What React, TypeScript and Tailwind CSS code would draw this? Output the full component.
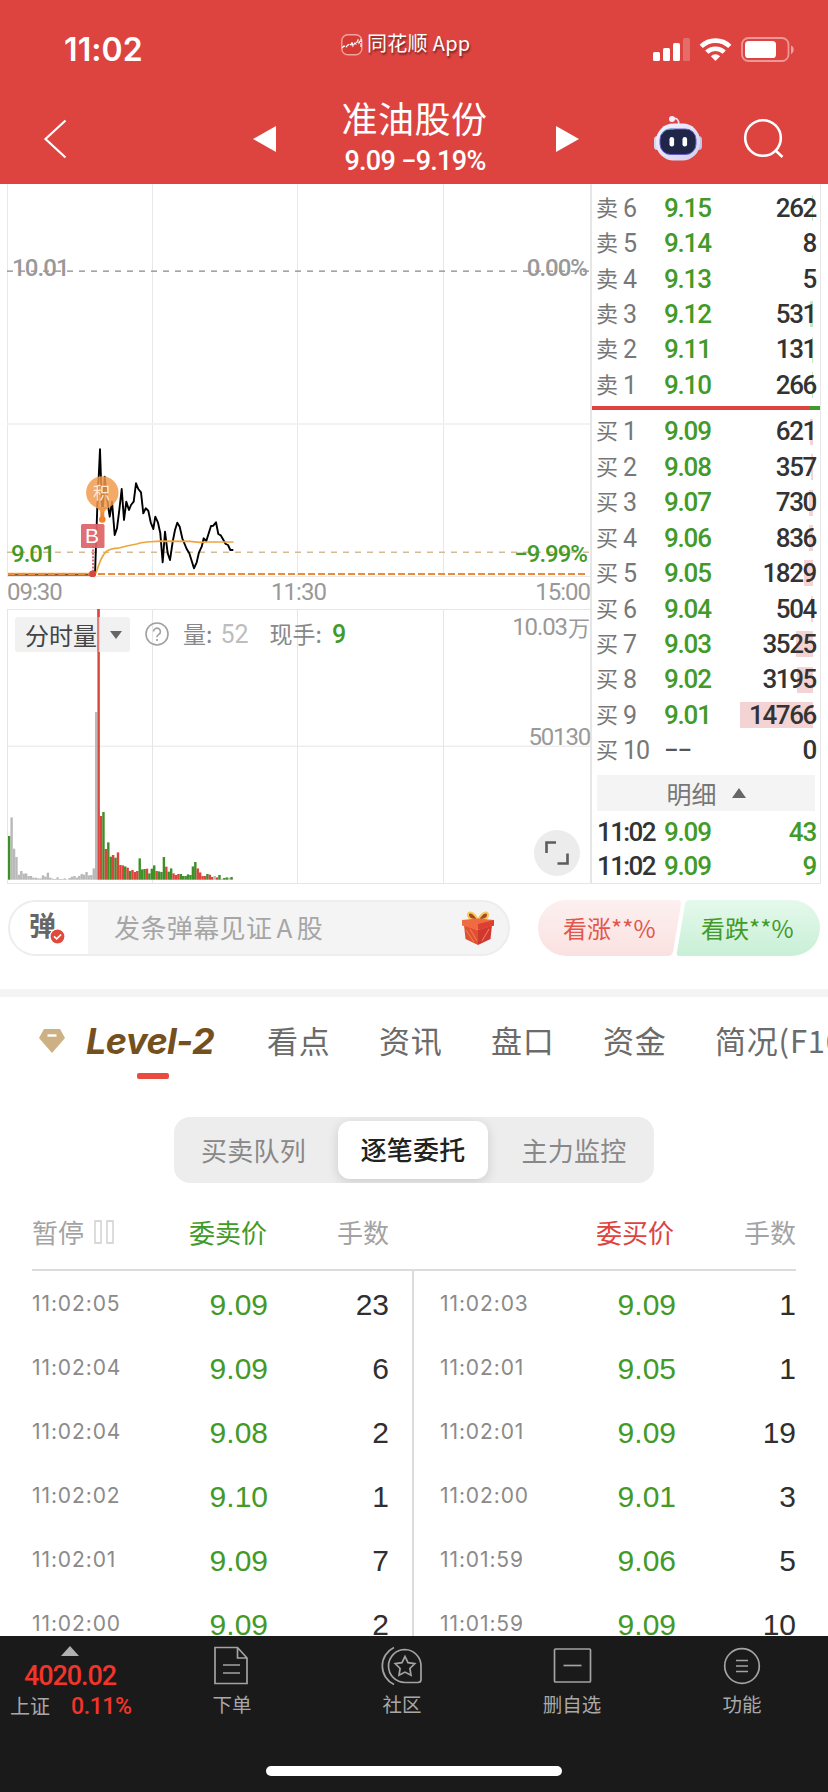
import type { ReactNode } from "react";

type Level = { side: "sell" | "buy"; n: number; price: string; qty: number; bar: number };
type Entry = { time: string; price: string; qty: number };

const SELLS: Level[] = [
  { side: "sell", n: 6, price: "9.15", qty: 262, bar: 1 },
  { side: "sell", n: 5, price: "9.14", qty: 8, bar: 0 },
  { side: "sell", n: 4, price: "9.13", qty: 5, bar: 0 },
  { side: "sell", n: 3, price: "9.12", qty: 531, bar: 3 },
  { side: "sell", n: 2, price: "9.11", qty: 131, bar: 1 },
  { side: "sell", n: 1, price: "9.10", qty: 266, bar: 1 },
];

const BUYS: Level[] = [
  { side: "buy", n: 1, price: "9.09", qty: 621, bar: 3 },
  { side: "buy", n: 2, price: "9.08", qty: 357, bar: 2 },
  { side: "buy", n: 3, price: "9.07", qty: 730, bar: 4 },
  { side: "buy", n: 4, price: "9.06", qty: 836, bar: 4 },
  { side: "buy", n: 5, price: "9.05", qty: 1829, bar: 9 },
  { side: "buy", n: 6, price: "9.04", qty: 504, bar: 2 },
  { side: "buy", n: 7, price: "9.03", qty: 3525, bar: 17 },
  { side: "buy", n: 8, price: "9.02", qty: 3195, bar: 16 },
  { side: "buy", n: 9, price: "9.01", qty: 14766, bar: 73 },
  { side: "buy", n: 10, price: "--", qty: 0, bar: 0 },
];

const SELL_ENTRIES: Entry[] = [
  { time: "11:02:05", price: "9.09", qty: 23 },
  { time: "11:02:04", price: "9.09", qty: 6 },
  { time: "11:02:04", price: "9.08", qty: 2 },
  { time: "11:02:02", price: "9.10", qty: 1 },
  { time: "11:02:01", price: "9.09", qty: 7 },
  { time: "11:02:00", price: "9.09", qty: 2 },
];

const BUY_ENTRIES: Entry[] = [
  { time: "11:02:03", price: "9.09", qty: 1 },
  { time: "11:02:01", price: "9.05", qty: 1 },
  { time: "11:02:01", price: "9.09", qty: 19 },
  { time: "11:02:00", price: "9.01", qty: 3 },
  { time: "11:01:59", price: "9.06", qty: 5 },
  { time: "11:01:59", price: "9.09", qty: 10 },
];

const PRICE_LINE =
  "8,574.6 95,574.6 97.3,507 100,449.3 102.3,519 104.7,476.7 107.3,500 109.7,516.7 112,501.7 114.7,535 117,528.3 119.3,510 121.7,489 124,520 126.3,501.7 129,510 131,505 133.7,501.7 136,483.3 138.3,489 141,492.3 143.3,513.3 145.7,508.3 148.3,510.7 150.7,522.3 153.3,529 155.3,516.7 158,522.7 160.3,533.3 162.7,562.3 165,531.7 167.7,553.3 170,560 172.7,541.7 175,530 177.3,522.7 179.7,526.7 182.3,538.3 186.7,549 189.3,553.3 194,568.3 196.7,562.3 199,552.3 201.7,546.7 203.7,538.3 206.3,541 211,526 213.3,525.7 216,522.3 218.3,534 220.7,535.3 225.7,544 228,545 230.3,550 233.3,550";

const AVG_LINE =
  "8,573.6 95.5,573.6 96.7,570.7 100,561.7 103.3,555 107.3,550.7 110,549.5 115,548.3 118,548.2 126.7,546 136.7,544 140,543 146.7,542 160,541.2 190,541.4 200,542.3 207,542 233.5,542";

// one entry a minute: g = down, r = up, x = flat
const VOLUMES =
  "g43.7 x62.3 x31 x22.7 x5 x8.7 x6 x6.3 x3.7 x3.7 x2 x2 x1.3 x1.3 x4.3 x3 x7 x2 x1 x.7 x2.3 x.7 x.7 x1.3 x.3 x1.7 x3 x3.7 x2 x3.7 x5.7 x5 x7.7 x4.3 x4.7 x11.3 x167.7 r270.7 r63.7 g67.7 r30.7 g37.3 g23 r24.7 g22 r27.3 r14.7 r14.3 g13.3 r12 g8.7 r9.7 r7.7 r8.7 g21.3 g10.3 g10.7 r11 g6.3 g11 g14.3 r8.7 g8.3 g7.7 g22.7 r13 g8 g11.3 r6.3 r4.7 r5.7 g5.7 g3.7 g3.7 g5.3 g4.7 g13.3 g17.7 r11.3 r7.3 r3.7 r3.7 g5.7 r5 r2.7 x3.7 r2.3 g4.7 x1 g1.7 g2.3 x2 g2.7".split(
    " "
  );

const VOLUME_COLORS: Record<string, string> = { g: "#3f8f29", r: "#dc443e", x: "#b9b9b9" };

const TABS = ["看点", "资讯", "盘口", "资金", "简况(F10)"];

function StatusBar() {
  return (
    <div className="flex h-[88px] items-start">
      <div className="ml-[64px] mt-[30px] w-[276px] font-['Inter'] text-[32px] leading-[40px] font-semibold tracking-[0.1px]">
        11:02
      </div>
      <div className="mt-[30px] flex items-center">
        <svg className="h-[24px] w-[24px]" viewBox="0 0 24 24" fill="none">
          <rect x="1.8" y="2.8" width="20" height="20" rx="6" fill="#d63a32" stroke="#f0a29f" strokeWidth="1.4" />
          <path d="M2 16l2-2 2 1 3-3 2 1 1-3 1 4 2-3 1 1 2-4 1 3 2-4v9" stroke="#fff" strokeWidth="1.2" strokeDasharray="4 1" />
        </svg>
        <span className="-mt-[1px] ml-[3px] text-[20px] leading-[28px] tracking-[0.3px] [text-shadow:1px_2px_2px_rgba(0,0,0,0.5)]">
          同花顺 App
        </span>
      </div>
      <svg className="mt-[36px] mr-[32px] ml-auto h-[28px] w-[144px]" viewBox="652 36 144 28">
        <rect x="653" y="52" width="7" height="9" rx="1.6" fill="#fff" />
        <rect x="663" y="48" width="7" height="13" rx="1.6" fill="#fff" />
        <rect x="673" y="43" width="7" height="18" rx="1.6" fill="#fff" />
        <rect x="683" y="38" width="7" height="23" rx="1.6" fill="#fff" opacity="0.22" />
        <g fill="none" stroke="#fff" strokeWidth="4.6">
          <path d="M701.2 46.4a20.5 20.5 0 0 1 28.6 0" />
          <path d="M706.8 52.2a12.6 12.6 0 0 1 17.4 0" />
        </g>
        <path d="M715.5 61l-4.6-4.8a6.7 6.7 0 0 1 9.2 0z" fill="#fff" />
        <rect x="742" y="38" width="46.5" height="23" rx="6.5" fill="none" stroke="#fff" strokeOpacity="0.45" strokeWidth="1.8" />
        <rect x="745" y="41" width="31" height="17" rx="3.6" fill="#fff" />
        <path d="M791 45.5c3.6 1.2 3.6 7 0 8.4z" fill="#fff" fillOpacity="0.5" />
      </svg>
    </div>
  );
}

function Robot() {
  return (
    <svg className="h-[48px] w-[50px]" viewBox="0 0 50 48">
      <defs>
        <linearGradient id="shell" x1="0" y1="0" x2="1" y2="1">
          <stop offset="0" stopColor="#f6f3fd" />
          <stop offset="1" stopColor="#cfd0f0" />
        </linearGradient>
      </defs>
      <path d="M18 5c6-2 8 1 8 6" fill="none" stroke="#e9dcf2" strokeWidth="1.8" />
      <circle cx="19" cy="5" r="3" fill="#f3edfa" />
      <rect x="1" y="22" width="7" height="14" rx="3.5" fill="#d5d6f2" />
      <rect x="42" y="22" width="7" height="14" rx="3.5" fill="#c3c4ec" />
      <rect x="3" y="9.500" width="44" height="37" rx="17.500" fill="url(#shell)" />
      <rect x="7" y="15" width="36" height="25.500" rx="10.500" fill="#1f2647" stroke="#6a5ac8" strokeWidth="1" />
      <path d="M9 20c2-5 6-5 12-5" stroke="#58c8de" strokeWidth="0.900" fill="none" />
      <rect x="16.500" y="23" width="4.600" height="9.600" rx="2.300" fill="#fff" />
      <rect x="29.500" y="23" width="4.600" height="9.600" rx="2.300" fill="#fff" />
    </svg>
  );
}

function Header() {
  return (
    <header className="h-[184px] bg-[#dd4440] text-white">
      <StatusBar />
      <div className="flex h-[96px] items-start">
        <svg className="mt-[30px] ml-[42px] h-[42px] w-[26px]" viewBox="0 0 26 42" fill="none">
          <path d="M23.5 2.5L3.5 21l20 18.5" stroke="#fff" strokeWidth="2.2" />
        </svg>
        <svg className="mt-[38px] ml-[185px] h-[26px] w-[23px]" viewBox="0 0 23 26">
          <path d="M0 13L23 0v26z" fill="#fff" />
        </svg>
        <div className="w-[280px] pr-[3px] text-center">
          <h1 className="mt-[5px] text-[36px] leading-[48px] tracking-[0.5px]">准油股份</h1>
          <div className="mt-[6px] pl-[1px] font-['Roboto'] text-[27px] leading-[28px] font-medium tracking-[-0.7px]">
            9.09 −9.19%
          </div>
        </div>
        <svg className="mt-[38px] h-[26px] w-[23px]" viewBox="0 0 23 26">
          <path d="M23 13L0 0v26z" fill="#fff" />
        </svg>
        <div className="mt-[26px] ml-[74px]">
          <Robot />
        </div>
        <svg className="mt-[30px] ml-[40px] h-[42px] w-[42px]" viewBox="0 0 42 42" fill="none" stroke="#fff" strokeWidth="2.6">
          <circle cx="20" cy="20" r="17.8" />
          <path d="M32.5 32.5l7 6.5" />
        </svg>
      </div>
    </header>
  );
}

function PriceChart() {
  return (
    <div className="relative h-[393px]">
      <svg className="block h-[393px] w-[583px]" viewBox="7 184 583 393" fill="none">
        <g stroke="#e8e8e8">
          <path d="M7.5 184v393M152.5 184v393M297.5 184v393M443.5 184v393" />
          <path d="M7 424h583" stroke="#f2f2f2" strokeWidth="2" />
          <path d="M7 576.5h583" />
        </g>
        <path d="M7 271.2h583" stroke="#888" strokeWidth="1.2" strokeDasharray="6 6" />
        <path d="M7 552.2h583" stroke="#d6bb94" strokeWidth="1.4" strokeDasharray="6 6" />
        <polyline points={PRICE_LINE} stroke="#000" strokeWidth="1.9" strokeLinejoin="round" />
        <polyline points={AVG_LINE} stroke="#f0a53c" strokeWidth="1.7" strokeLinejoin="round" />
        <path d="M8 574h577" stroke="#ec8b3a" strokeWidth="2.2" strokeDasharray="7 3" />
        <path d="M102.3 519v-9" stroke="#f08a33" strokeWidth="4" />
        <circle cx="102.3" cy="519.5" r="3.3" fill="#f0822a" />
        <path d="M93 546v28" stroke="#e46c6e" strokeWidth="2" strokeDasharray="2 1.4" />
        <circle cx="92.5" cy="574" r="3.4" fill="#d9463f" />
        <circle cx="102.3" cy="492.5" r="16.2" fill="#f1984a" fillOpacity="0.84" />
        <path d="M96 507h13l-6.5 6z" fill="#f1984a" />
        <rect x="81" y="524" width="23.5" height="24" rx="1.5" fill="#dd6468" fillOpacity="0.93" />
      </svg>
      <span className="absolute top-[297px] left-[86px] text-[17px] leading-[22px] text-[#ffe9d6]">积</span>
      <span className="absolute top-[341px] left-[78px] font-['Liberation_Sans'] text-[21px] leading-[22px] text-white">B</span>
      <span className="absolute top-[69px] left-[5px] font-['Roboto'] text-[24px] leading-[30px] font-medium tracking-[-0.9px] text-[#999]">
        10.01
      </span>
      <span className="absolute top-[69px] right-[3px] font-['Roboto'] text-[24px] leading-[30px] font-medium tracking-[-1px] text-[#999]">
        0.00%
      </span>
      <span className="absolute top-[355px] left-[4px] font-['Roboto'] text-[24px] leading-[30px] font-medium tracking-[-1px] text-[#429a28]">
        9.01
      </span>
      <span className="absolute top-[355px] right-[3px] font-['Roboto'] text-[24px] leading-[30px] font-medium tracking-[-1px] text-[#429a28]">
        −9.99%
      </span>
    </div>
  );
}

function VolumeChart() {
  return (
    <div className="relative h-[275px]">
      <svg className="block h-[275px] w-[583px]" viewBox="7 609 583 275" fill="none">
        <path
          d="M7 609.5h583M7 746.2h583M7 883.5h583M7.5 609v275M152.5 609v275M297.5 609v275M443.5 609v275"
          stroke="#e6e6e6"
        />
        {VOLUMES.map((v, i) => {
          const h = Number(v.slice(1));
          return <rect key={i} x={8 + i * 2.417} y={879.7 - h} width="2.417" height={h} fill={VOLUME_COLORS[v[0]]} />;
        })}
      </svg>
      <div className="absolute top-[8px] left-[8px] flex h-[35px] w-[115px] items-center rounded-[3px] bg-[#eeeeee]/80">
        <span className="ml-[10px] text-[24px] leading-[34px] text-[#444]">分时量</span>
        <svg className="ml-[13px] h-[8px] w-[12px]" viewBox="0 0 12 8">
          <path d="M0 0h12L6 8z" fill="#666" />
        </svg>
      </div>
      <div className="absolute top-0 left-[90px] h-[43px] w-[2.4px] bg-[#dc443e]/60" />
      <div className="absolute top-[8px] left-[138px] flex h-[34px] items-center text-[23px] leading-[34px] text-[#888]">
        <svg className="h-[24px] w-[24px]" viewBox="0 0 24 24" fill="none" stroke="#a0a0a0" strokeWidth="1.6">
          <circle cx="12" cy="12" r="11" />
          <path d="M8.6 9.6a3.4 3.4 0 1 1 5.2 2.8c-1.3.8-1.8 1.4-1.8 2.9M12 17v2" />
        </svg>
        <span className="-mt-[2px] ml-[14px]">量:</span>
        <span className="mt-[1px] ml-[8px] font-['Roboto'] text-[25px] text-[#bdbdbd]">52</span>
        <span className="-mt-[2px] ml-[21px]">现手:</span>
        <span className="mt-[1px] ml-[10px] font-['Roboto'] text-[25px] font-medium text-[#429a28]">9</span>
      </div>
      <span className="absolute top-[2px] right-0 flex text-[22px] leading-[32px] text-[#999]">
        <span className="font-['Roboto'] text-[24px] tracking-[-1.1px]">10.03</span>
        <span className="-mt-[1px] ml-[1px]">万</span>
      </span>
      <span className="absolute top-[112px] right-0 font-['Roboto'] text-[24px] leading-[32px] tracking-[-1.2px] text-[#999]">
        50130
      </span>
      <button className="absolute top-[221px] left-[527px] flex h-[46px] w-[46px] items-center justify-center rounded-full bg-[#ececec]">
        <svg className="h-[24px] w-[24px]" viewBox="0 0 24 24" fill="none" stroke="#5c5c5c" strokeWidth="2.6">
          <path d="M1.5 12V1.5H11M22.500 12.500V22.500H12.500" />
        </svg>
      </button>
    </div>
  );
}

function LevelRow({ level }: { level: Level }) {
  return (
    <div className="relative flex h-[35.45px] items-center pr-[4px] pl-[4px]">
      <span className="-mt-[2px] w-[68px] text-[22px] leading-[34px] whitespace-nowrap text-[#777]">
        {level.side === "sell" ? "卖" : "买"}
        <span className="relative top-[1px] ml-[5px] font-['Roboto'] text-[25px] tracking-[-1px]">{level.n}</span>
      </span>
      <span
        className={`font-['Roboto'] text-[26px] leading-[34px] font-medium tracking-[-1.2px] ${
          level.price === "--" ? "text-[#555]" : "text-[#429a28]"
        }`}
      >
        {level.price === "--" ? "−−" : level.price}
      </span>
      {level.bar > 0 && (
        <div
          className={`absolute top-[5px] right-[7px] h-[26px] ${level.side === "sell" ? "bg-[#c4e6c4]" : "bg-[#f4d3d5]"}`}
          style={{ width: level.bar }}
        />
      )}
      <span className="relative ml-auto font-['Roboto'] text-[26px] leading-[34px] font-medium tracking-[-1.4px] text-[#333]">
        {level.qty}
      </span>
    </div>
  );
}

function TradeRow({ qty }: { qty: number }) {
  return (
    <div className="flex h-[33.500px] items-center pr-[4px] pl-[5px] font-['Roboto'] text-[26px] leading-[33px] font-medium tracking-[-1.2px] text-[#429a28]">
      <span className="w-[67px] tracking-[-1.6px] text-[#333]">11:02</span>
      <span>9.09</span>
      <span className="ml-auto">{qty}</span>
    </div>
  );
}

function OrderBook() {
  return (
    <div className="h-[700px] w-[231px] border-r border-b border-l-2 border-[#e6e6e6] border-l-[#e6e6e6] pt-[6px]">
      {SELLS.map((l) => (
        <LevelRow key={l.n} level={l} />
      ))}
      <div className="mt-[3px] mb-[4px] flex h-[4px] bg-[#dd4440]">
        <div className="ml-auto w-[10px] bg-[#429a28]" />
      </div>
      {BUYS.map((l) => (
        <LevelRow key={l.n} level={l} />
      ))}
      <div className="mx-[5px] mt-[7px] mb-[5px] flex h-[36px] items-center justify-center bg-[#f4f4f4] text-[25px] leading-[36px] text-[#777]">
        明细
        <svg className="ml-[15px] h-[10px] w-[14px]" viewBox="0 0 14 10">
          <path d="M0 10L7 0l7 10z" fill="#666" />
        </svg>
      </div>
      <TradeRow qty={43} />
      <TradeRow qty={9} />
    </div>
  );
}

function Gift() {
  return (
    <svg className="h-[36px] w-[34px]" viewBox="0 0 34 36">
      <path d="M17 10C12 0 5 1 7.500 7c1.500 3.500 6 3 9.500 3zM17 10c5-10 12-9 9.500-3-1.500 3.500-6 3-9.500 3z" fill="#a8482a" stroke="#f6c958" strokeWidth="2" />
      <path d="M3 15l14 5v15L4.500 29z" fill="#e0512f" />
      <path d="M31 15l-14 5v15l12.500-6z" fill="#cf3730" />
      <path d="M1 10l16-1.500L33 10v5.500L17 20 1 15.500z" fill="#f06a42" />
      <path d="M17 14l16-4v5.500L17 20z" fill="#db4030" />
      <path d="M5 20l8 12M9 19l7 12M21 31l7-12" stroke="#ee7a50" strokeWidth="1.100" />
    </svg>
  );
}

function CommentBar() {
  return (
    <div className="flex h-[105px] items-start pt-[16px] pl-[8px]">
      <div className="flex h-[56px] w-[502px] items-center overflow-hidden rounded-full border-2 border-[#ededed] bg-[#f4f4f4]">
        <div className="relative h-full w-[78px] bg-white">
          <span className="absolute top-[5px] left-[19px] text-[27px] leading-[36px] font-bold text-[#666]">弹</span>
          <svg className="absolute top-[26px] left-[39px] h-[17px] w-[17px]" viewBox="0 0 17 17">
            <circle cx="8.500" cy="8.500" r="7.600" fill="#e04a3c" stroke="#fff" strokeWidth="1.400" />
            <path d="M5 8.300l2.700 2.500 4.400-4.300" fill="none" stroke="#fff" strokeWidth="1.700" />
          </svg>
        </div>
        <span className="-mt-[2px] ml-[26px] text-[26px] leading-[50px] tracking-[0.4px] text-[#a6a6a6]">
          发条弹幕见证<span className="mx-[4px]">A</span>股
        </span>
        <div className="mr-[13px] ml-auto">
          <Gift />
        </div>
      </div>
      <div className="relative ml-[28px] h-[56px] w-[282px]">
        <svg className="block h-[56px] w-[282px]" viewBox="0 0 282 56">
          <defs>
            <linearGradient id="bull" x1="0" y1="0" x2="0" y2="1">
              <stop offset="0" stopColor="#fdf0f0" />
              <stop offset="1" stopColor="#fae1e1" />
            </linearGradient>
            <linearGradient id="bear" x1="0" y1="0" x2="0" y2="1">
              <stop offset="0" stopColor="#e5f9ec" />
              <stop offset="1" stopColor="#c9efd6" />
            </linearGradient>
          </defs>
          <path d="M28 0h111q4.500 0 4 4l-8 48q-1 4-5 4H28a28 28 0 0 1 0-56z" fill="url(#bull)" />
          <path d="M152 0h102a28 28 0 0 1 0 56H142q-4 0-3-4l8-48q1-4 5-4z" fill="url(#bear)" />
        </svg>
        <div className="absolute inset-0 flex text-[24px] leading-[55px]">
          <span className="ml-[25px] w-[138px] text-[#e2574c]">看涨**%</span>
          <span className="text-[#429a28]">看跌**%</span>
        </div>
      </div>
    </div>
  );
}

function Tabs() {
  return (
    <nav className="flex h-[120px] items-start overflow-hidden whitespace-nowrap">
      <svg className="mt-[31px] ml-[38px] h-[26px] w-[28px]" viewBox="0 0 28 26">
        <path d="M6 1h16l5 9-13 15L1 10z" fill="#cdb083" />
        <path d="M9.500 7.500h9" stroke="#fff" strokeWidth="2.400" />
      </svg>
      <div className="ml-[20px] w-[133px]">
        <div className="mt-[20px] font-['Inter'] text-[36px] leading-[48px] font-bold tracking-[-0.5px] text-[#74501f] italic">
          Level-2
        </div>
        <div className="mt-[8px] ml-[51px] h-[6px] w-[32px] rounded-[2px] bg-[#ea4b3f]" />
      </div>
      {TABS.map((t, i) => (
        <span
          key={t}
          className={`mt-[19px] w-[112px] shrink-0 text-[31px] leading-[48px] tracking-[0.8px] text-[#6b6b6b] ${i === 0 ? "ml-[48px]" : ""}`}
        >
          {t}
        </span>
      ))}
    </nav>
  );
}

function Segments() {
  return (
    <div className="mx-auto flex h-[66px] w-[480px] items-center overflow-hidden rounded-[16px] bg-[#ededed] text-[26px] leading-[56px] tracking-[0.2px] text-[#888]">
      <span className="w-[164px] pr-[5px] text-center">买卖队列</span>
      <span className="h-[58px] w-[150px] rounded-[12px] bg-white text-center font-medium text-[#222] shadow-[0_3px_12px_rgba(0,0,0,0.14)]">
        逐笔委托
      </span>
      <span className="w-[166px] pl-[6px] text-center">主力监控</span>
    </div>
  );
}

function EntryList({ rows }: { rows: Entry[] }) {
  return (
    <>
      {rows.map((r, i) => (
        <div key={i} className="flex h-[64px] items-center leading-[64px]">
          <span className="w-[100px] font-['Inter'] text-[21px] text-[#8a8a8a]">
            <span className="relative -top-[1px] tracking-[0.900px]">{r.time}</span>
          </span>
          <span className="w-[136px] text-right font-['Liberation_Sans'] text-[30px] text-[#429a28]">{r.price}</span>
          <span className="ml-auto font-['Liberation_Sans'] text-[30px] text-[#2f2f2f]">{r.qty}</span>
        </div>
      ))}
    </>
  );
}

function EntryTable() {
  return (
    <div className="mx-[32px] h-[453px] overflow-hidden">
      <div className="flex h-[88px] items-center border-b-2 border-[#dcdcdc] pt-[11px] text-[26px] leading-[40px] text-[#a3a3a3]">
        <span className="flex w-[99px] items-center">
          暂停
          <svg className="ml-[9px] h-[24px] w-[22px]" viewBox="0 0 22 24" fill="none" stroke="#cbcbcb" strokeWidth="1.300">
            <path d="M2 1h6v22H2zM14 1h6v22h-6z" />
          </svg>
        </span>
        <span className="w-[136px] text-right text-[#429a28]">委卖价</span>
        <span className="w-[122px] text-right">手数</span>
        <span className="w-[285px] text-right text-[#dd4440]">委买价</span>
        <span className="ml-auto">手数</span>
      </div>
      <div className="grid grid-cols-2">
        <div className="border-r-2 border-[#dcdcdc] pt-[2px] pr-[23px]">
          <EntryList rows={SELL_ENTRIES} />
        </div>
        <div className="pt-[2px] pl-[26px]">
          <EntryList rows={BUY_ENTRIES} />
        </div>
      </div>
    </div>
  );
}

function NavItem({ label, children }: { label: string; children: ReactNode }) {
  return (
    <div className="flex w-[170px] flex-col items-center">
      <svg className="mt-[9px] h-[42px] w-[42px]" viewBox="0 0 42 42" fill="none" stroke="#a3a3a3" strokeWidth="1.700">
        {children}
      </svg>
      <span className="mt-[3px] text-[19.500px] leading-[28px] text-[#a8a8a8]">{label}</span>
    </div>
  );
}

function BottomBar() {
  return (
    <footer className="h-[156px] bg-[#1a1a1a]">
      <div className="flex h-[130px]">
        <div className="flex w-[147px] flex-col">
          <svg className="mt-[10px] ml-[61px] h-[10px] w-[18px]" viewBox="0 0 18 10">
            <path d="M0 10L9 0l9 10z" fill="#b0b0b0" />
          </svg>
          <span className="mt-[4px] ml-[24px] font-['Roboto'] text-[27px] leading-[32px] font-medium tracking-[-1.1px] text-[#f2342a]">
            4020.02
          </span>
          <div className="ml-[10px] flex leading-[28px]">
            <span className="w-[61px] text-[20px] text-[#a8a8a8]">上证</span>
            <span className="pt-[1px] font-['Roboto'] text-[23px] font-medium tracking-[-0.4px] text-[#f2342a]">0.11%</span>
          </div>
        </div>
        <NavItem label="下单">
          <path d="M4 2.500h22.500L36 13v25.500H4zM26.500 2.500V13H36M12 20h17M12 28h17" />
        </NavItem>
        <NavItem label="社区">
          <path d="M13 2.500A20.500 20.500 0 0 0 13 39.500" />
          <path d="M24 4.500a16.500 16.500 0 0 0 0 33h13q3 0 3-3V21a16.500 16.500 0 0 0-16-16.500z" />
          <path d="M24 11.500l3 6.200 6.800 1-4.900 4.800 1.100 6.800-6-3.200-6 3.200 1.100-6.800-4.900-4.800 6.800-1z" />
        </NavItem>
        <NavItem label="删自选">
          <rect x="3.500" y="4" width="36" height="33" rx="1" />
          <path d="M12.500 20.500h18" />
        </NavItem>
        <NavItem label="功能">
          <circle cx="21" cy="21" r="17.300" />
          <path d="M15 15.500h12M15 21h12M15 26.500h12" />
        </NavItem>
      </div>
      <div className="mx-auto h-[10px] w-[296px] rounded-full bg-white" />
    </footer>
  );
}

export default function App() {
  return (
    <div className="h-[1792px] w-[828px] overflow-hidden bg-white font-['Noto_Sans_CJK_SC',sans-serif]">
      <Header />
      <div className="flex h-[700px]">
        <div className="ml-[7px] w-[583px]">
          <PriceChart />
          <div className="flex h-[32px] items-center justify-between pb-[2px] font-['Roboto'] text-[24px] leading-[30px] tracking-[-1px] text-[#999]">
            <span>09:30</span>
            <span>11:30</span>
            <span>15:00</span>
          </div>
          <VolumeChart />
        </div>
        <OrderBook />
      </div>
      <CommentBar />
      <div className="h-[8px] bg-[#f4f4f4]" />
      <Tabs />
      <Segments />
      <EntryTable />
      <BottomBar />
    </div>
  );
}
